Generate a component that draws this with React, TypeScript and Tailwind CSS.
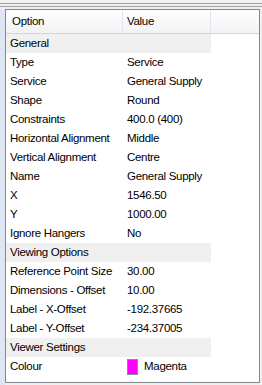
import React from "react";

type Row = { group?: boolean; label: string; value?: string; swatch?: string };

const rows: Row[] = [
  { group: true, label: "General" },
  { label: "Type", value: "Service" },
  { label: "Service", value: "General Supply" },
  { label: "Shape", value: "Round" },
  { label: "Constraints", value: "400.0 (400)" },
  { label: "Horizontal Alignment", value: "Middle" },
  { label: "Vertical Alignment", value: "Centre" },
  { label: "Name", value: "General Supply" },
  { label: "X", value: "1546.50" },
  { label: "Y", value: "1000.00" },
  { label: "Ignore Hangers", value: "No" },
  { group: true, label: "Viewing Options" },
  { label: "Reference Point Size", value: "30.00" },
  { label: "Dimensions - Offset", value: "10.00" },
  { label: "Label - X-Offset", value: "-192.37665" },
  { label: "Label - Y-Offset", value: "-234.37005" },
  { group: true, label: "Viewer Settings" },
  { label: "Colour", value: "Magenta", swatch: "#ff00ff" },
];

export default function App() {
  return (
    <div
      className="w-[262px] h-[385px] bg-[#f0f0f0] flex flex-col text-[11.5px] tracking-[-0.3px] text-black overflow-hidden"
      style={{ fontFamily: '"Liberation Sans", Arial, sans-serif' }}
    >
      {/* top double line */}
      <div className="h-[9px] flex flex-col pt-[3px] gap-[2px]">
        <div className="h-px bg-[#a0a0a0]" />
        <div className="h-px bg-[#a0a0a0]" />
      </div>
      <div className="flex flex-1">
        <div className="w-[5px] bg-[#dde6f2]" />
        <div className="flex-1 mr-[2px] mb-[2px] border border-[#828790] bg-white flex flex-col">
          {/* column headers */}
          <div className="flex h-[24px] bg-gradient-to-b from-[#ffffff] to-[#f1f2f4] border-b border-[#d5d5d5]">
            <div className="w-[117px] pl-[6px] flex items-center border-r border-[#e3e5e8]">Option</div>
            <div className="w-[88px] pl-[4px] flex items-center border-r border-[#e3e5e8]">Value</div>
            <div className="flex-1" />
          </div>
          {rows.map((r, i) =>
            r.group ? (
              <div key={i} className="flex h-[19px]">
                <div className="w-[205px] bg-[#f0f0f0] pl-[4px] flex items-center">{r.label}</div>
              </div>
            ) : (
              <div key={i} className="flex h-[19px]">
                <div className="w-[117px] pl-[4px] flex items-center whitespace-nowrap">{r.label}</div>
                <div className="w-[88px] pl-[4px] flex items-center whitespace-nowrap gap-[6px]">
                  {r.swatch && (
                    <span
                      className="inline-block w-[11px] h-[16px] border border-[#8c8c8c]"
                      style={{ backgroundColor: r.swatch }}
                    />
                  )}
                  {r.value}
                </div>
              </div>
            )
          )}
        </div>
      </div>
    </div>
  );
}
